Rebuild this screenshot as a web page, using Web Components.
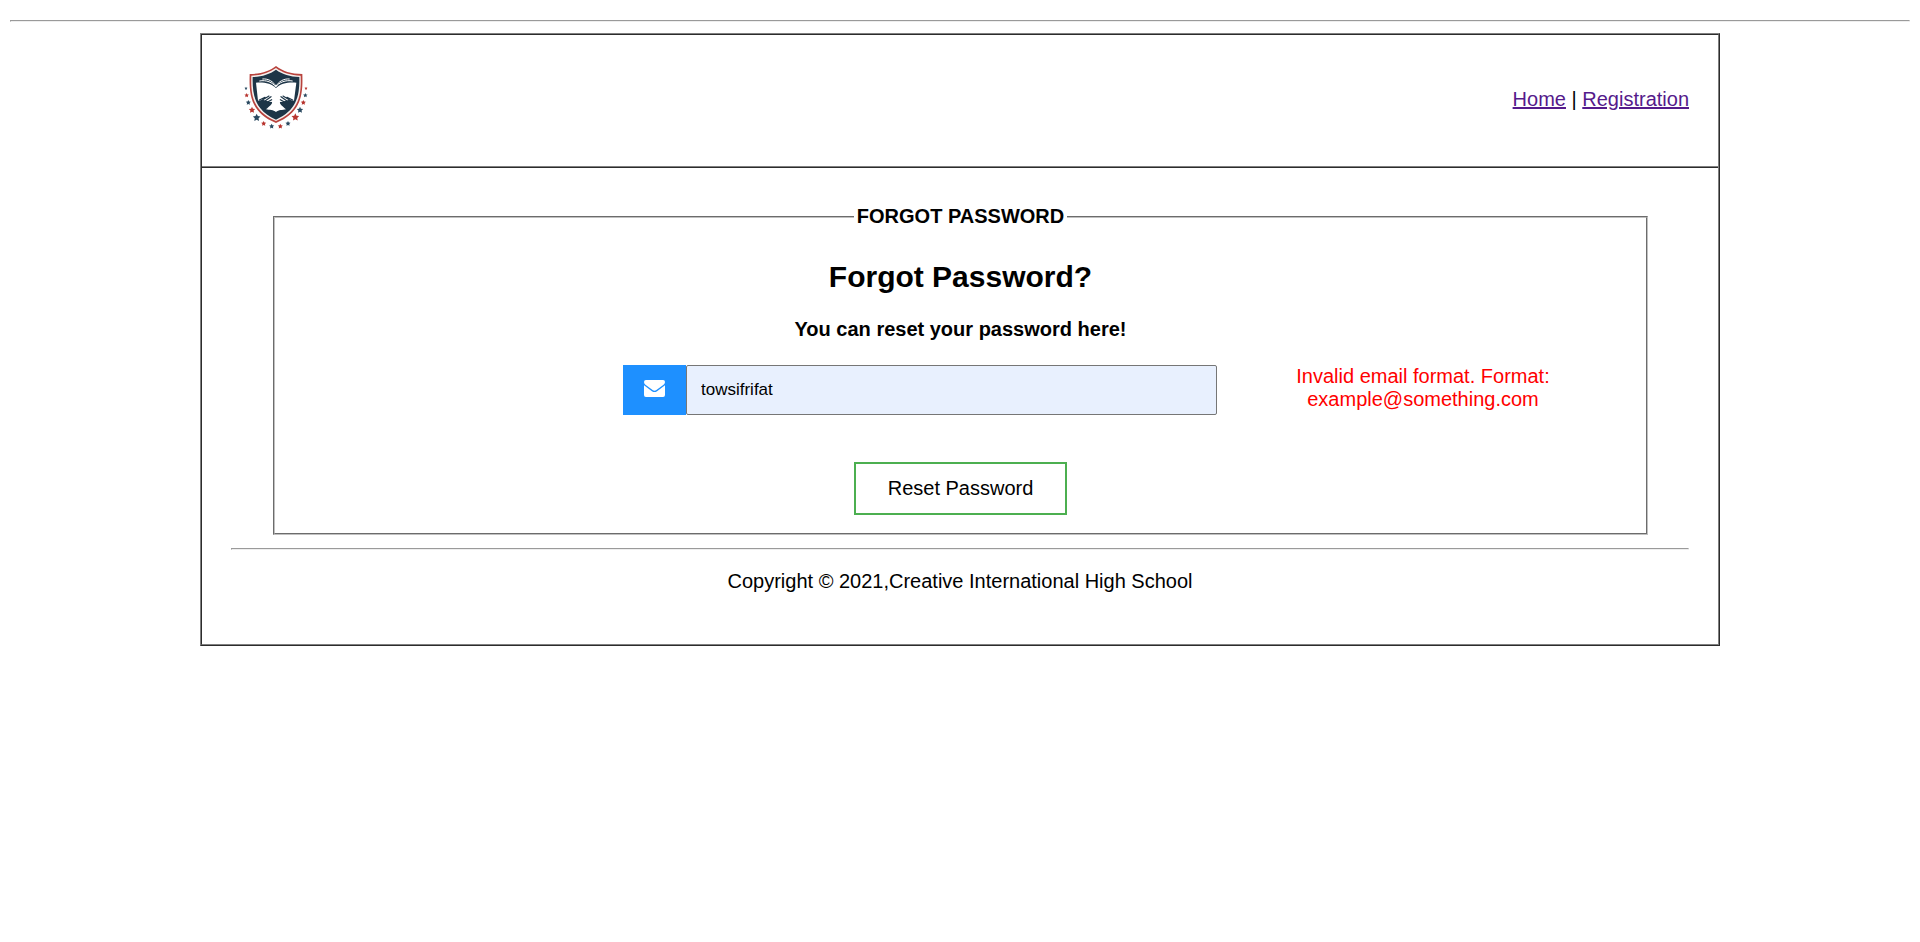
<!DOCTYPE html>
<html lang="en">
<head>
<meta charset="utf-8">
<title>Forgot Password</title>
<style>
body { margin: 10px; background: #fff; color: #000; font: 20px/23px "Liberation Sans", Arial, sans-serif; }
</style>
</head>
<body>
<forgot-page></forgot-page>
<script>
const define = (name, html, setup) => customElements.define(name, class extends HTMLElement {
  constructor() {
    super();
    const t = document.createElement('template');
    t.innerHTML = html;
    this.attachShadow({ mode: 'open' }).append(t.content.cloneNode(true));
    if (setup) setup(this.shadowRoot);
  }
});

define('school-logo', `
<style>
:host { display: block; }
svg { display: block; }
</style>
<svg width="100" height="83" viewBox="123 177 300 249" role="img" aria-label="School crest">
  <path d="M258 198C239 213 213 222 179 222C177 283 181 338 258 369C335 338 339 283 337 222C303 222 277 213 258 198Z" fill="#b8433d"/>
  <path d="M258 204C239 218 214 226 184 227C182 283 187 334 258 363C329 334 334 283 332 227C302 226 277 218 258 204Z" fill="#f4efed"/>
  <path d="M258 209C239 223 215 230 188 231C187 283 193 330 258 359C323 330 329 283 328 231C301 230 277 223 258 209Z" fill="#1d3547"/>
  <path d="M198 248C222 246 244 250 258 264C272 250 294 246 319 248L312 302L270 306C268 312 277 318 288 328C277 331 266 329 258 336C250 329 239 331 228 328C239 318 248 312 246 306L204 302Z" fill="#fff"/>
  <g fill="none" stroke="#fff" stroke-width="3">
    <path d="M208 243C229 239 248 247 257 261C267 247 287 239 308 243"/>
    <path d="M217 237C236 235 251 246 258 259C265 246 280 235 299 237"/>
  </g>
  <g id="hand">
    <path d="M205 302L218 299L232 304L244 308L238 316L229 323L222 328L210 322Z" fill="#1d3547"/>
    <path d="M208 300L225 292M216 301L237 288M224 304L243 290M231 307L245 299" fill="none" stroke="#1d3547" stroke-width="3.5" stroke-linecap="round"/>
  </g>
  <use href="#hand" transform="translate(516 0) scale(-1 1)"/>
  <g id="stars"></g>
</svg>`, root => {
  const navy = '#2b4a61', red = '#b8352f';
  const stars = [[168,265,5,navy],[170,286,7,red],[175,308,8,navy],[186,330,10,red],[200,353,12,navy],[221,371,8,red],[245,379,8,navy],
    [271,379,8,red],[294,371,8,navy],[316,352,12,red],[330,330,10,navy],[340,308,8,red],[346,286,7,navy],[348,265,5,red]];
  const group = root.getElementById('stars');
  for (const [x, y, r, fill] of stars) {
    const p = document.createElementNS('http://www.w3.org/2000/svg', 'polygon');
    const points = [];
    for (let i = 0; i < 10; i++) {
      const a = -Math.PI / 2 + i * Math.PI / 5, q = i % 2 ? r * 0.5 : r;
      points.push((x + q * Math.cos(a)).toFixed(1) + ',' + (y + q * Math.sin(a)).toFixed(1));
    }
    p.setAttribute('points', points.join(' '));
    p.setAttribute('fill', fill);
    group.append(p);
  }
});

define('page-header', `
<style>
:host { display: flex; align-items: center; justify-content: space-between; padding: 24px 29px; border-bottom: 2px ridge gray; }
nav { padding-bottom: 2px; }
a { color: #551a8b; text-decoration: underline; }
</style>
<school-logo></school-logo>
<nav><a href="#home">Home</a> | <a href="#registration">Registration</a></nav>`);

define('email-field', `
<style>
:host { display: flex; height: 50px; }
label { display: flex; align-items: center; justify-content: center; flex: none; width: 63px; background: #1e90ff; }
svg { display: block; margin-bottom: 3px; }
input { flex: 1; min-width: 0; box-sizing: border-box; margin: 0; padding: 0 14px; border: 1px solid #767676; border-radius: 2px;
  background: #e8f0fe; color: #000; font: 17px "Liberation Sans", Arial, sans-serif; outline: none; }
</style>
<label for="email" aria-label="Email">
  <svg width="21" height="17" viewBox="0 0 22 17" preserveAspectRatio="none" fill="#fff" aria-hidden="true">
    <path d="M2 0H20Q22 0 22 2Q22 3.6 20.5 4.7L13 10Q11 11.5 9 10L1.5 4.7Q0 3.6 0 2Q0 0 2 0Z"/>
    <path d="M0 5.3L8.3 11.2Q11 13 13.7 11.2L22 5.3V15Q22 17 20 17H2Q0 17 0 15Z"/>
  </svg>
</label>
<input id="email" type="text" name="email" value="towsifrifat">`);

define('reset-form', `
<style>
:host { display: block; }
fieldset { margin: 0 41px 0 42px; padding: 7px 17px 18px; border: 2px groove #c0c0c0; min-width: 0; text-align: center; }
legend { margin: 0 auto; padding: 0 3px; font-weight: bold; }
h2 { margin: 24px 0; font-size: 30px; line-height: 35px; }
h4 { margin: 0 0 24px; font-size: 20px; line-height: 23px; }
.row { display: grid; grid-template-columns: 331fr 594fr 412fr; }
email-field { grid-column: 2; }
.error { color: #f00; }
button { margin: 47px 0 0; padding: 13px 32px; border: 2px solid #4caf50; background: #fff; color: #000;
  font: 20px/23px "Liberation Sans", Arial, sans-serif; }
</style>
<form>
  <fieldset>
    <legend>FORGOT PASSWORD</legend>
    <h2>Forgot Password?</h2>
    <h4>You can reset your password here!</h4>
    <div class="row">
      <email-field></email-field>
      <span class="error" role="alert">Invalid email format. Format: example@something.com</span>
    </div>
    <button type="button">Reset Password</button>
  </fieldset>
</form>`);

define('page-footer', `
<style>
:host { display: block; text-align: center; }
hr { margin: 13px 0 20px; border: 1px solid; border-color: #9a9a9a #eee #eee #9a9a9a; }
p { margin: 0; }
</style>
<hr>
<p><slot></slot></p>`);

define('forgot-page', `
<style>
:host { display: block; }
hr { margin: 0; border: 1px solid; border-color: #9a9a9a #eee #eee #9a9a9a; }
.top { padding: 10px 0 11px; }
.frame { box-sizing: border-box; width: 80%; margin: 0 auto; border: 2px ridge gray; }
main { padding: 37px 29px 51px; }
</style>
<div class="top"><hr></div>
<div class="frame">
  <page-header></page-header>
  <main>
    <reset-form></reset-form>
    <page-footer>Copyright © 2021,Creative International High School</page-footer>
  </main>
</div>`);
</script>
</body>
</html>
